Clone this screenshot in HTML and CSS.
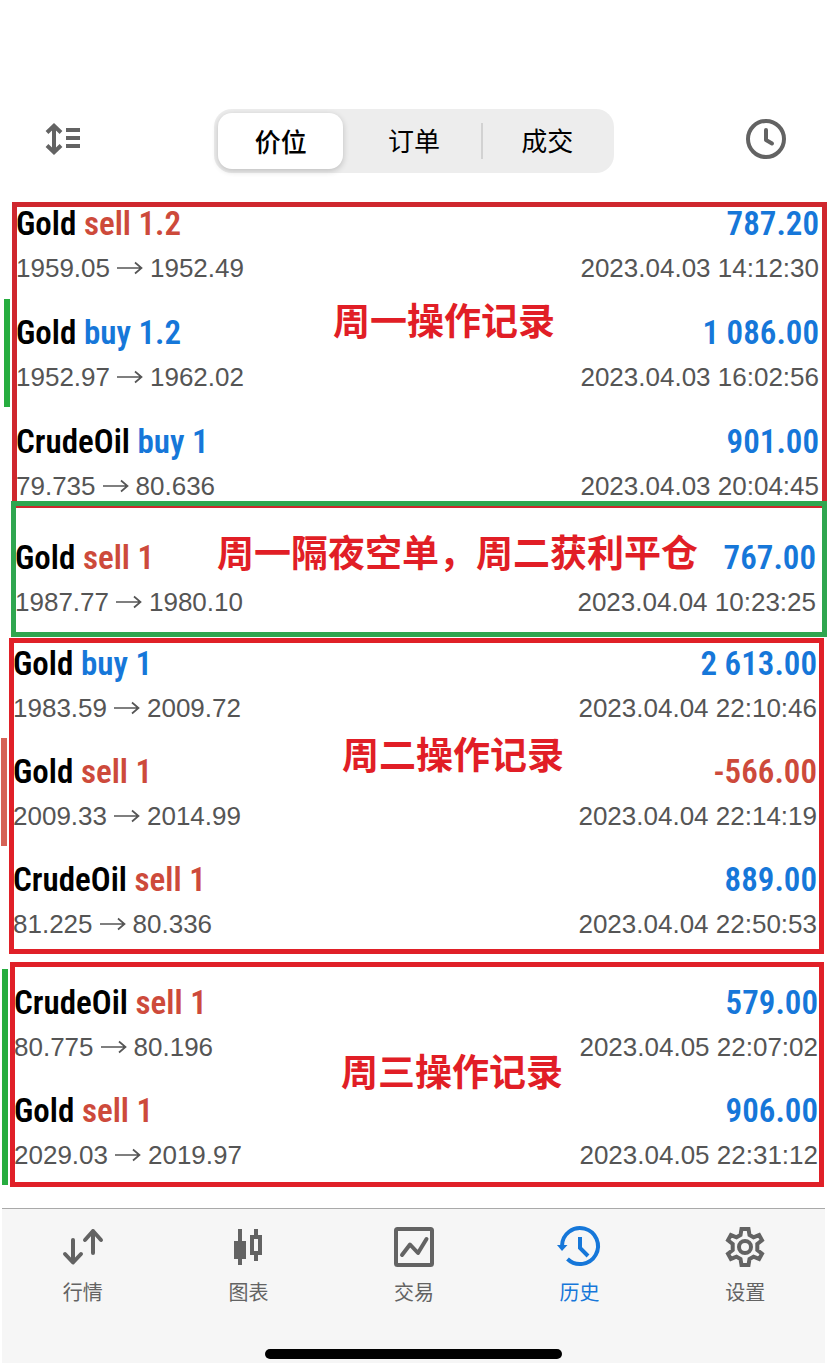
FILE: index.html
```html
<!DOCTYPE html>
<html lang="zh-CN">
<head>
<meta charset="utf-8">
<meta name="viewport" content="width=device-width, initial-scale=1">
<title>历史</title>
<link rel="stylesheet" href="styles.css">
</head>
<body>
<svg class="defs" aria-hidden="true">
  <symbol id="arrow" viewBox="0 0 26 14"><path d="M0 7H24M18 1.500L24.500 7L18 12.500" fill="none" stroke="currentColor" stroke-width="1.700"/></symbol>
</svg>
<header class="top">
  <button class="icon-btn" aria-label="排序">
    <svg width="36" height="32" viewBox="0 0 36 32" fill="none" stroke="currentColor" stroke-width="4"><path d="M9 3V29M2 9.500L9 2.800L16 9.500M2 22.500L9 29.200L16 22.500M21 7H35M21 15H35M21 23H35"/></svg>
  </button>
  <div class="segment" role="tablist">
    <button class="seg on" role="tab" aria-selected="true">价位</button>
    <button class="seg" role="tab" aria-selected="false">订单</button>
    <button class="seg last" role="tab" aria-selected="false">成交</button>
  </div>
  <button class="icon-btn" aria-label="时间">
    <svg width="40" height="40" viewBox="0 0 40 40" fill="none" stroke="currentColor" stroke-width="4"><circle cx="20" cy="20" r="18"/><path d="M20 11V21L26 24.500" stroke-linecap="round" stroke-linejoin="round"/></svg>
  </button>
</header>
<main>
  <section class="group monday">
    <h2 class="note">周一操作记录</h2>
    <article class="deal">
      <div class="line main"><span>Gold <span class="sell">sell 1.2</span></span><span class="buy">787.20</span></div>
      <div class="line sub"><span class="move">1959.05<svg><use href="#arrow"/></svg>1952.49</span><time>2023.04.03 14:12:30</time></div>
    </article>
    <article class="deal mark gain">
      <div class="line main"><span>Gold <span class="buy">buy 1.2</span></span><span class="buy">1 086.00</span></div>
      <div class="line sub"><span class="move">1952.97<svg><use href="#arrow"/></svg>1962.02</span><time>2023.04.03 16:02:56</time></div>
    </article>
    <article class="deal">
      <div class="line main"><span>CrudeOil <span class="buy">buy 1</span></span><span class="buy">901.00</span></div>
      <div class="line sub"><span class="move">79.735<svg><use href="#arrow"/></svg>80.636</span><time>2023.04.03 20:04:45</time></div>
    </article>
  </section>
  <section class="group overnight">
    <h2 class="note">周一隔夜空单，周二获利平仓</h2>
    <article class="deal">
      <div class="line main"><span>Gold <span class="sell">sell 1</span></span><span class="buy">767.00</span></div>
      <div class="line sub"><span class="move">1987.77<svg><use href="#arrow"/></svg>1980.10</span><time>2023.04.04 10:23:25</time></div>
    </article>
  </section>
  <section class="group tuesday">
    <h2 class="note">周二操作记录</h2>
    <article class="deal">
      <div class="line main"><span>Gold <span class="buy">buy 1</span></span><span class="buy">2 613.00</span></div>
      <div class="line sub"><span class="move">1983.59<svg><use href="#arrow"/></svg>2009.72</span><time>2023.04.04 22:10:46</time></div>
    </article>
    <article class="deal mark loss">
      <div class="line main"><span>Gold <span class="sell">sell 1</span></span><span class="sell">-566.00</span></div>
      <div class="line sub"><span class="move">2009.33<svg><use href="#arrow"/></svg>2014.99</span><time>2023.04.04 22:14:19</time></div>
    </article>
    <article class="deal">
      <div class="line main"><span>CrudeOil <span class="sell">sell 1</span></span><span class="buy">889.00</span></div>
      <div class="line sub"><span class="move">81.225<svg><use href="#arrow"/></svg>80.336</span><time>2023.04.04 22:50:53</time></div>
    </article>
  </section>
  <section class="group wednesday">
    <h2 class="note">周三操作记录</h2>
    <article class="deal mark gain">
      <div class="line main"><span>CrudeOil <span class="sell">sell 1</span></span><span class="buy">579.00</span></div>
      <div class="line sub"><span class="move">80.775<svg><use href="#arrow"/></svg>80.196</span><time>2023.04.05 22:07:02</time></div>
    </article>
    <article class="deal mark gain">
      <div class="line main"><span>Gold <span class="sell">sell 1</span></span><span class="buy">906.00</span></div>
      <div class="line sub"><span class="move">2029.03<svg><use href="#arrow"/></svg>2019.97</span><time>2023.04.05 22:31:12</time></div>
    </article>
  </section>
</main>
<footer class="dock">
  <nav class="tabs">
    <a href="#quotes"><svg viewBox="0 0 44 44" fill="none" stroke="currentColor" stroke-width="4" stroke-linecap="round" stroke-linejoin="round"><path d="M12 15V37M4 29L12 37.500L20 29M32 28V6M24 15L32 6L40 15"/></svg><span>行情</span></a>
    <a href="#chart"><svg viewBox="0 0 44 44" fill="currentColor"><path d="M12 4h4v12h4v18h-4v6h-4v-6H8V16h4z"/><path fill-rule="evenodd" d="M28 4h4v6h4v20h-4v6h-4v-6h-4V10h4zM28 14v12h4V14z"/></svg><span>图表</span></a>
    <a href="#trade"><svg viewBox="0 0 44 44" fill="none" stroke="currentColor" stroke-width="4" stroke-linejoin="round"><rect x="4" y="4" width="36" height="36" rx="1.500"/><path d="M10 30L18 19.500L26 28L34.500 14" stroke-linecap="round"/></svg><span>交易</span></a>
    <a href="#history" class="active" aria-current="page"><svg viewBox="0 0 44 44" fill="none" stroke="currentColor" stroke-width="4"><path d="M4 21A18 18 0 1 1 9.500 34"/><path d="M-1 20H9.500L4 26Z" fill="currentColor" stroke="none"/><path d="M22 12V23L30 31"/></svg><span>历史</span></a>
    <a href="#settings"><svg viewBox="0 0 44 44" fill="none" stroke="currentColor" stroke-width="4"><path d="M18.500 4h7l1 6 4 2.300 5.600-2.200 2.900 5.200-4.700 3.700v6l4.700 3.700-2.900 5.200-5.600-2.200-4 2.300-1 6h-7l-1-6-4-2.300-5.600 2.200L5 28.700 9.700 25v-6L5 15.300l2.900-5.200 5.600 2.200 4-2.300z"/><circle cx="22" cy="22" r="6"/></svg><span>设置</span></a>
  </nav>
  <div class="home"></div>
</footer>
</body>
</html>
```
FILE: styles.css
```css
* { box-sizing: border-box; }
body {
  margin: 0;
  background: #fff;
  color: #000;
  font-family: "Liberation Sans", "Noto Sans CJK SC", sans-serif;
}
button { border: 0; background: none; padding: 0; font: inherit; color: inherit; }
.defs { position: absolute; width: 0; height: 0; }

.top {
  display: flex;
  align-items: center;
  justify-content: space-between;
  padding: 109px 42px 29px 45px;
}
.icon-btn { display: flex; width: 40px; height: 60px; align-items: center; color: #636363; padding-bottom: 4px; }
.segment {
  display: grid;
  grid-template-columns: 1fr 1fr 1fr;
  width: 400px;
  max-width: 60%;
  height: 64px;
  margin-right: 3px;
  border-radius: 18px;
  background: #ededed;
}
.seg { font-family: "Noto Sans CJK SC", sans-serif; font-size: 26px; line-height: 56px; padding-bottom: 2px; }
.seg.on { margin: 4px; padding: 0; background: #fff; border-radius: 14px; font-weight: 500; line-height: 52px; box-shadow: 0 2px 6px rgba(0, 0, 0, .2); }
.seg.last { position: relative; }
.seg.last::before { content: ""; position: absolute; left: 0; top: 14px; bottom: 14px; width: 2px; background: #d2d2d2; }

.group {
  position: relative;
  display: grid;
  gap: 30px;
  border: 5px solid #e02028;
}
.monday { margin: 0 1px 0 12px; padding-right: 3px; gap: 31px; border-color: #cf272e; }
.overnight { margin: -7px 1px 0 11px; padding: 35px 6px 13px 0; border-color: #2fa64f; }
.tuesday { margin: 1px 4px 0 9px; padding: 4px 2px 8px 0; }
.wednesday { margin: 8px 4px 0 10px; padding: 19px 1px 10px 0; }

/* captions laid over the rows */
.note {
  position: absolute;
  margin: 0;
  z-index: 1;
  font: 700 37px/44px "Noto Sans CJK SC", sans-serif;
  color: #e11e26;
  white-space: nowrap;
}
.monday .note { left: 316px; top: 90px; }
.overnight .note { left: 201px; top: 23px; }
.tuesday .note { left: 328px; top: 88px; }
.wednesday .note { left: 326px; top: 81px; }

.deal { position: relative; display: grid; gap: 10px; margin-left: -1px; }
.line { display: flex; justify-content: space-between; line-height: 34px; white-space: nowrap; }
.main { font-family: "Roboto Condensed", "Liberation Sans Narrow", sans-serif; font-size: 33px; font-weight: 600; }
.sub { font-size: 26px; color: #555; }
.buy { color: #1677d9; }
.sell { color: #cd4a3b; }
.move { display: flex; align-items: center; gap: 7px; }
.move svg { width: 26px; height: 14px; }
.mark::before { content: ""; position: absolute; left: -12px; top: -17px; bottom: -13px; width: 6px; }
.gain::before { background: #27ad40; }
.loss::before { background: #d56357; }

.dock { margin: 21px 3px 0 2px; border-top: 1px solid #a9a9a9; background: #f6f6f6; padding-bottom: 4px; }
.tabs { display: grid; grid-template-columns: repeat(5, 1fr); margin: 0 -3px 0 -2px; }
.tabs a {
  display: grid;
  justify-items: center;
  gap: 8px;
  padding: 16px 0 42px;
  color: #636363;
  text-decoration: none;
  font: 20px/30px "Noto Sans CJK SC", sans-serif;
}
.tabs svg { width: 44px; height: 44px; overflow: visible; }
.tabs .active { color: #1677d9; }
.home { width: 36%; height: 10px; margin: 0 auto; border-radius: 5px; background: #000; }
```
